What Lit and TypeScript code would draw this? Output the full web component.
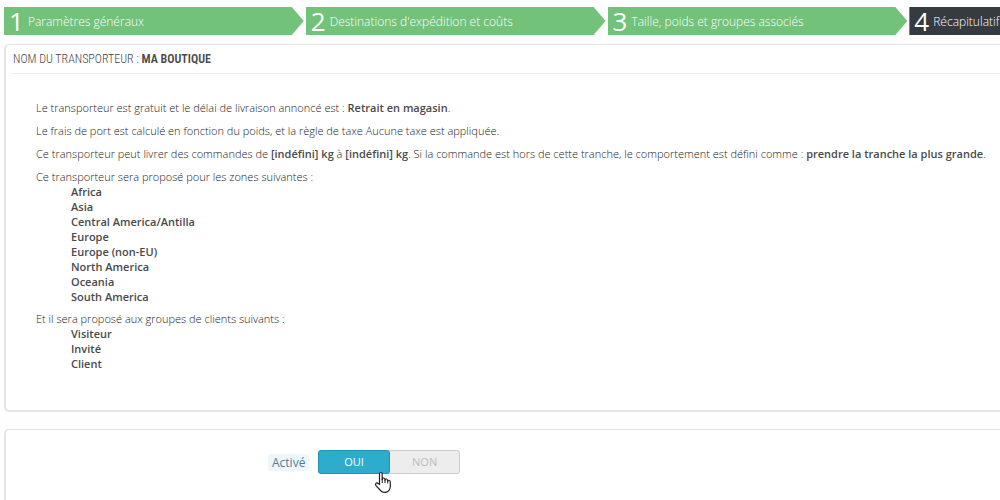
import { LitElement, html, css } from "lit";
import { customElement, state } from "lit/decorators.js";

@customElement("app-root")
export class AppRoot extends LitElement {
  static styles = css`
    :host {
      display: block;
      box-sizing: border-box;
      height: 100vh;
      overflow: hidden;
      padding: 7px 0 0 4px;
      background: #fdfefd;
      color: #222;
      font: 300 11px/15px "Open Sans", "Noto Sans", sans-serif;
    }
    * {
      box-sizing: border-box;
    }
    b {
      color: #4a4a4a;
      font-weight: 600;
    }
    .steps {
      display: flex;
      gap: 2px;
      margin: 0 0 9px;
      padding: 0;
      list-style: none;
      overflow: hidden;
    }
    .step {
      flex: 0 0 30.1%;
      clip-path: polygon(0 0, calc(100% - 12px) 0, 100% 50%, calc(100% - 12px) 100%, 0 100%);
      background: #72c279;
    }
    .step.current {
      background: #363a41;
    }
    .step a {
      display: flex;
      align-items: center;
      gap: 4px;
      height: 28px;
      padding-left: 5px;
      color: #fff;
      font-size: 12px;
      text-decoration: none;
      white-space: nowrap;
    }
    .number {
      font-size: 26px;
      font-weight: 400;
      line-height: 28px;
    }
    .panel {
      margin: 0 0 17px;
      border: solid #e2e5e5;
      border-width: 1px 0 2px 2px;
      border-radius: 5px 0 0 5px;
      background: #fff;
    }
    .title {
      margin: 0 0 0 4px;
      padding: 0 0 0 3px;
      border-bottom: 1px solid #eee;
      color: #444;
      font: 300 12px/28px "Roboto Condensed", "Open Sans Condensed", sans-serif;
      text-transform: uppercase;
    }
    .title b {
      font-weight: 600;
    }
    .summary {
      padding: 26px 0 32px 30px;
    }
    .summary p {
      margin: 0 0 8px;
    }
    .summary p.intro {
      margin: 0;
    }
    .names {
      margin: 0 0 7px;
      padding: 0 0 0 35px;
      list-style: none;
      color: #4a4a4a;
      font-weight: 600;
    }
    .activation {
      display: flex;
      align-items: center;
      gap: 9px;
      margin: 0;
      padding: 20px 0 80px 262px;
    }
    .hint {
      padding: 0 4px;
      border-radius: 3px;
      background: #edf7fb;
      color: #4f7f96;
      font-size: 12px;
      font-weight: 400;
      line-height: 17px;
    }
    .switch {
      position: relative;
      display: flex;
      width: 142px;
      height: 24px;
      border: 1px solid #c8cccd;
      border-radius: 3px;
      background: #ededed;
    }
    .option {
      flex: 1;
      color: #bbb;
      font-size: 11px;
      font-weight: 400;
      line-height: 22px;
      text-align: center;
      cursor: pointer;
    }
    .option.on {
      margin: -1px 0 -1px -1px;
      border: 1px solid #2493b0;
      border-radius: 3px;
      background: #2eacce;
      color: #fff;
    }
    .option input {
      position: absolute;
      margin: 0;
      opacity: 0;
    }
    .pointer {
      position: absolute;
      left: 55px;
      top: 20px;
      width: 18px;
      height: 23px;
      pointer-events: none;
    }
  `;

  @state() private active = true;

  private steps = [
    "Paramètres généraux",
    "Destinations d'expédition et coûts",
    "Taille, poids et groupes associés",
    "Récapitulatif",
  ];
  private zones = [
    "Africa",
    "Asia",
    "Central America/Antilla",
    "Europe",
    "Europe (non-EU)",
    "North America",
    "Oceania",
    "South America",
  ];
  private groups = ["Visiteur", "Invité", "Client"];

  private option(value: boolean, text: string) {
    const on = this.active === value;
    return html`<label class="option ${on ? "on" : ""}"
      ><input type="radio" name="active" .checked=${on} @change=${() => (this.active = value)} />${text}</label
    >`;
  }

  render() {
    return html`
      <ol class="steps">
        ${this.steps.map(
          (name, i) => html`<li class="step ${i === 3 ? "current" : ""}">
            <a href="#step-${i + 1}"><span class="number">${i + 1}</span>${name}</a>
          </li>`
        )}
      </ol>
      <section class="panel">
        <h1 class="title">Nom du transporteur : <b>Ma boutique</b></h1>
        <div class="summary">
          <p>Le transporteur est gratuit et le délai de livraison annoncé est : <b>Retrait en magasin</b>.</p>
          <p>Le frais de port est calculé en fonction du poids, et la règle de taxe Aucune taxe est appliquée.</p>
          <p>
            Ce transporteur peut livrer des commandes de <b>[indéfini] kg</b> à <b>[indéfini] kg</b>. Si la commande
            est hors de cette tranche, le comportement est défini comme : <b>prendre la tranche la plus grande</b>.
          </p>
          <p class="intro">Ce transporteur sera proposé pour les zones suivantes :</p>
          <ul class="names">
            ${this.zones.map((z) => html`<li>${z}</li>`)}
          </ul>
          <p class="intro">Et il sera proposé aux groupes de clients suivants :</p>
          <ul class="names">
            ${this.groups.map((g) => html`<li>${g}</li>`)}
          </ul>
        </div>
      </section>
      <section class="panel">
        <div class="activation" role="radiogroup" aria-labelledby="active-label">
          <span class="hint" id="active-label">Activé</span>
          <div class="switch">
            ${this.option(true, "OUI")}${this.option(false, "NON")}
            <svg class="pointer" viewBox="0 0 18 23" aria-hidden="true">
              <path
                d="M5.5 13.5V3Q5.500 1.500 6.800 1.500T8.200 3V8.500Q8.300 7 9.500 7T11 8.500V9.300Q11.200 7.800 12.300 8T13.700 9.500V10.300Q14 9 15 9.300T16.300 10.800V15.500Q16.300 18 14.500 20Q11 22.500 7.500 20.500L2.200 14.800Q1 13.300 2 12.300T4.200 12.500Z"
                fill="#fff"
                stroke="#222"
                stroke-width="1.200"
                stroke-linejoin="round"
              />
              <path d="M8.200 8V12M11 9V12M13.700 10V12.500" stroke="#222" stroke-width="1" fill="none" />
            </svg>
          </div>
        </div>
      </section>
    `;
  }
}
